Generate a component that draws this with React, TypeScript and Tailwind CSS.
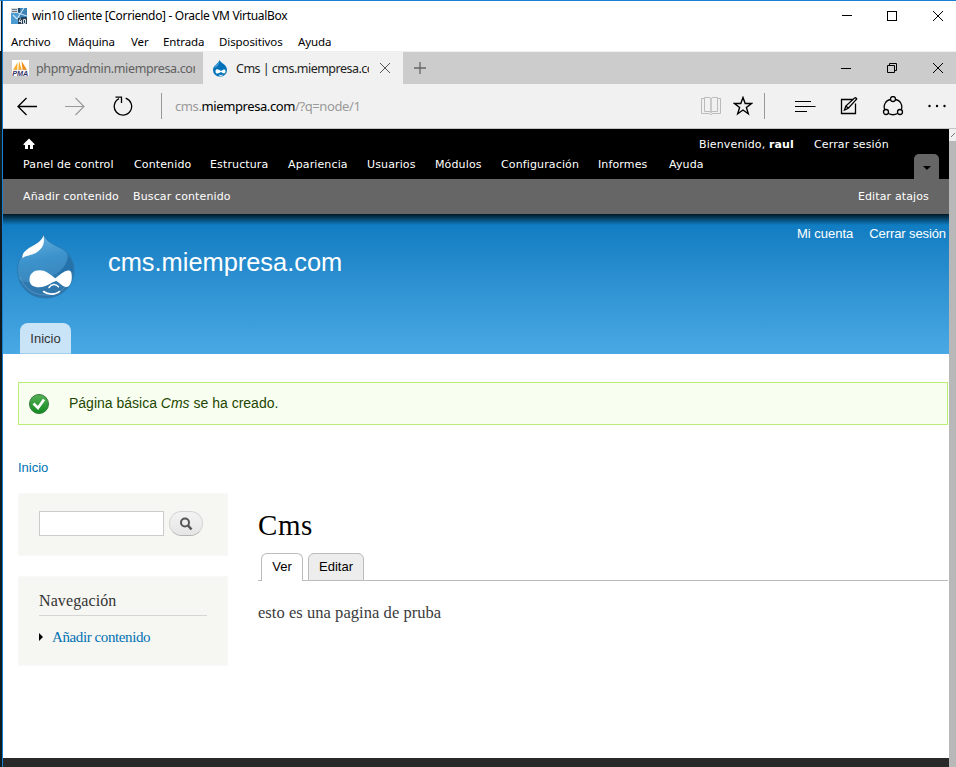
import type { ReactNode } from "react";

const ADMIN_LINKS = [
  { label: "Panel de control", width: "w-[111px]" },
  { label: "Contenido", width: "w-[76px]" },
  { label: "Estructura", width: "w-[78px]" },
  { label: "Apariencia", width: "w-[79px]" },
  { label: "Usuarios", width: "w-[68px]" },
  { label: "Módulos", width: "w-[66px]" },
  { label: "Configuración", width: "w-[97px]" },
  { label: "Informes", width: "w-[71px]" },
  { label: "Ayuda", width: "w-[40px]" },
];

const MENUS = [
  { label: "Archivo", width: "w-[57px]" },
  { label: "Máquina", width: "w-[63px]" },
  { label: "Ver", width: "w-[32px]" },
  { label: "Entrada", width: "w-[56px]" },
  { label: "Dispositivos", width: "w-[79px]" },
  { label: "Ayuda", width: "w-[40px]" },
];

function CloseIcon() {
  return (
    <svg width="10" height="10" viewBox="0 0 10 10" stroke="currentColor" fill="none">
      <path d="M0 0L10 10M10 0L0 10" />
    </svg>
  );
}

function VirtualBoxIcon() {
  return (
    <svg width="16" height="16" viewBox="0 0 16 16">
      <rect width="16" height="16" fill="#244a68" />
      <path d="M0 5h8l4 11H0z" fill="#4c9bd3" />
      <path d="M9 0h7v9H9z" fill="#3c83b8" />
      <path d="M0 0h7v5H0z" fill="#d6dde2" />
      <path d="M1 1.500h5M1 3.500h5" stroke="#6b7680" />
      <path d="M13 0L6 11M7 5l9 3M2 7l4 4" stroke="#cfe6f5" strokeWidth="1.100" />
      <path d="M7 10h9v6H7z" fill="#2a3f52" />
      <path d="M9.500 10.500L8 13.500h3M10.500 12v3.500M12.500 11.500h2v4h-2z" stroke="#d7dfe5" fill="none" />
    </svg>
  );
}

function PmaIcon() {
  return (
    <svg width="17" height="16" viewBox="0 0 17 16">
      <rect width="17" height="16" fill="#fff" />
      <path d="M1 10L5.500 2.500 5.200 10zM6.300 10L7 1l2.800 9z" fill="#f9ac28" />
      <path d="M10.600 10L9.500 1l5.500 9z" fill="#f18b12" />
      <path d="M1 10h14" stroke="#c9c9d6" strokeWidth="0.600" />
      <text x="0.300" y="15.700" textLength="16" lengthAdjust="spacingAndGlyphs" fill="#333366" className="font-['Liberation_Sans'] text-[7px] font-bold italic">PMA</text>
    </svg>
  );
}

function SmallDrop() {
  return (
    <svg width="16" height="17" viewBox="0 0 16 17">
      <path d="M7.500 0C8.300 3 15 4.300 15 10a7 6.600 0 0 1-14 0C1 5 6.500 4 7.500 0z" fill="#0072b9" />
      <path d="M7.300 1C6 4 3 4.500 2 7.500c3 0 5-2.500 5.300-6.500z" fill="#4ba0d6" />
      <path d="M3.500 11.500c0-3.300 3.200-2.300 5.500-.5 2-1.500 4.500-2.500 4.500.3 0 3.200-2.500 2.200-4.500.8-2.200 1.500-5.500 2.600-5.500-.6z" fill="#fff" />
      <path d="M7.200 15c1 .6 2.400.6 3.400 0" stroke="#fff" fill="none" />
    </svg>
  );
}

function DrupalLogo() {
  return (
    <svg width="58" height="66" viewBox="0 0 58 66">
      <defs>
        <linearGradient id="drop" x1="0" y1="0" x2="0.200" y2="1">
          <stop offset="0" stopColor="#6ab6e4" />
          <stop offset="0.450" stopColor="#3c92cb" />
          <stop offset="1" stopColor="#3a80b4" />
        </linearGradient>
        <clipPath id="body">
          <path d="M26.700 0.500C29 8 38 11 44.500 14.500 53 19.500 57 28 57 36c0 16-12.500 28-28.500 28S0.500 52 0.500 36C0.500 28 4 22 9 17 14.500 12 24 8 26.700 0.500z" />
        </clipPath>
      </defs>
      <g clipPath="url(#body)">
        <rect width="58" height="66" fill="url(#drop)" />
        <path d="M52 16c1 12-6 20-15 25C26 48 12 52 0 44v22h58V16z" fill="#246a9f" opacity="0.500" />
        <path d="M50 18c2 8-2 16-10 22l16-2 2-12z" fill="#1f6ca6" opacity="0.600" />
      </g>
      <path d="M26.700 0.500C29 8 38 11 44.500 14.500 53 19.500 57 28 57 36c0 16-12.500 28-28.500 28S0.500 52 0.500 36C0.500 28 4 22 9 17 14.500 12 24 8 26.700 0.500z" fill="none" stroke="#2878b0" strokeWidth="0.800" />
      <path d="M3 43c4 11 13 18 25.500 18S50 54 54 44" stroke="#6fb0de" fill="none" opacity="0.500" />
      <path d="M26.500 1.500c1 6 0.500 11-5 15.500C15.500 22 10 20.500 5.500 24 4.500 19 10 15 15.500 12S25 6.500 26.500 1.500z" fill="#fff" />
      <path d="M12.500 45.500c0-6 4.500-9.300 10-9.300 7 0 11.500 5.300 16 8 4-2.700 8.500-7.700 13-7.700 2.700 0 3.300 2.500 3.300 6.500 0 5.500-2.300 10-5.300 10-4 0-7-4.800-10.500-6C34 48.500 29 53.300 22 53.300c-5.500 0-9.500-2.300-9.500-7.800z" fill="#fff" />
      <path d="M32 53.500c2.500-4 7-4 9.500-.7" stroke="#fff" strokeWidth="1.500" fill="none" strokeLinecap="round" />
      <path d="M26.500 57.500c4.500 3.500 12 3.500 16 0" stroke="#fff" strokeWidth="1.600" fill="none" strokeLinecap="round" />
    </svg>
  );
}

function TitleBar() {
  return (
    <header className="h-[50px] shrink-0 bg-white font-['Noto_Sans',sans-serif] text-[12px] text-black">
      <div className="flex h-[29px] items-center pl-2">
        <VirtualBoxIcon />
        <span className="ml-[5px] grow whitespace-nowrap tracking-[-0.32px]">win10 cliente [Corriendo] - Oracle VM VirtualBox</span>
        <span className="mr-[35px] h-px w-[10px] bg-black" />
        <span className="mr-9 size-[10px] border border-black" />
        <span className="mr-[13px]"><CloseIcon /></span>
      </div>
      <nav className="flex h-[21px] items-center pl-2 pt-0.5 text-[11.500px] tracking-[-0.1px]">
        {MENUS.map((m) => (
          <span key={m.label} className={`${m.width} shrink-0 whitespace-nowrap`}>{m.label}</span>
        ))}
      </nav>
    </header>
  );
}

function TabStrip() {
  return (
    <div className="flex h-[33px] shrink-0 border-t border-[#eeeeee] bg-[#cccccc] font-['Noto_Sans',sans-serif] text-[12.500px]">
      <div className="flex w-[200px] items-center pl-[9px] text-[#606060]">
        <PmaIcon />
        <span className="ml-[7px] w-[159px] overflow-hidden whitespace-nowrap pt-0.5 tracking-[-0.37px]">phpmyadmin.miempresa.com</span>
      </div>
      <div className="flex w-[200px] items-center bg-[#f1f1f1] pl-[9px] text-[#222222]">
        <SmallDrop />
        <span className="ml-2 w-[133px] overflow-hidden whitespace-nowrap pt-0.5 tracking-[-0.52px]">Cms | cms.miempresa.com</span>
        <span className="ml-[11px] text-[#555]"><CloseIcon /></span>
      </div>
      <div className="flex grow items-center">
        <svg className="ml-[11px] text-[#666]" width="12" height="12" viewBox="0 0 12 12" stroke="currentColor"><path d="M6 0v12M0 6h12" strokeWidth="1.300" /></svg>
      </div>
      <div className="flex items-center text-black">
        <span className="mr-[36px] h-px w-[10px] bg-black" />
        <svg className="mr-9" width="10" height="10" viewBox="0 0 10 10" fill="none" stroke="currentColor"><path d="M0.500 2.500h7v7h-7zM2.500 2V0.500h7v7H8" /></svg>
        <span className="mr-[13px]"><CloseIcon /></span>
      </div>
    </div>
  );
}

function AddressBar() {
  return (
    <div className="flex h-[45px] shrink-0 items-center border-b border-[#c4c4c4] bg-[#f1f1f1] pl-[14px] text-black">
      <svg width="20" height="19" viewBox="0 0 20 19" fill="none" stroke="currentColor" strokeWidth="1.300"><path d="M20 9.500H1M9.500 1L1 9.500 9.500 18" /></svg>
      <svg className="ml-7 text-[#999]" width="20" height="19" viewBox="0 0 20 19" fill="none" stroke="currentColor" strokeWidth="1.100"><path d="M0 9.500h19M10.500 1L19 9.500 10.500 18" /></svg>
      <svg className="ml-[28px]" width="20" height="20" viewBox="0 0 20 20" fill="none" stroke="currentColor" strokeWidth="1.300"><path d="M12.700 2.200A8.700 8.700 0 1 1 6 2.700M2.500 1.200H8.500V7" /></svg>
      <span className="ml-[28px] h-[26px] w-px bg-[#999]" />
      <span className="ml-[13px] grow whitespace-nowrap pt-px font-['Noto_Sans',sans-serif] text-[13px] tracking-[-0.4px] text-[#999]">cms.<span className="text-black">miempresa.com</span>/?q=node/1</span>
      <svg className="text-[#bbb]" width="20" height="19" viewBox="0 0 20 19" fill="none" stroke="currentColor"><path d="M3.500 1.500H0.500v15h8l1.500 1.500 1.500-1.500h8v-15h-3M3.500 .5H8q2 0 2 2v13q0-1-2-1H3.500zM16.500 .5H12q-2 0-2 2v13q0-1 2-1h4.500z" /></svg>
      <svg className="ml-3" width="20" height="20" viewBox="0 0 20 20" fill="none" stroke="currentColor" strokeWidth="1.400"><path d="M10 1.500l2.200 6h6.300l-5.100 3.900 1.900 6.300L10 14l-5.300 3.700 1.900-6.300-5.100-3.900h6.300z" /></svg>
      <span className="ml-[11px] h-[26px] w-px bg-[#999]" />
      <svg className="ml-[30px]" width="21" height="12" viewBox="0 0 21 12" stroke="currentColor"><path d="M0 1.500h16M0 6.500h20.500M0 11.500h12" strokeWidth="1.200" /></svg>
      <svg className="ml-[24px]" width="19" height="18" viewBox="0 0 19 18" fill="none" stroke="currentColor" strokeWidth="1.300"><path d="M12.500 2.500h-11v14h14V6.500M4.500 13l1.300-4L14.500 1q1.500-.7 2.300 1L8.300 11.300zM5.800 9l2.500 2.300" /></svg>
      <svg className="ml-[23px]" width="22" height="20" viewBox="0 0 22 20" fill="none" stroke="currentColor" strokeWidth="1.300"><circle cx="11" cy="3" r="2.500" /><circle cx="4" cy="16" r="2.500" /><circle cx="18" cy="16" r="2.500" /><path d="M8.500 3.500C4 4 1 9 2.700 13.500M13.500 3.500C18 4 21 9 19.300 13.500M6.500 17.500q4.500 2.500 9 0" /></svg>
      <svg className="ml-[24px] mr-[10px]" width="18" height="4" viewBox="0 0 18 4"><circle cx="1.500" cy="2" r="1.200" /><circle cx="9" cy="2" r="1.200" /><circle cx="16.500" cy="2" r="1.200" /></svg>
    </div>
  );
}

function AdminToolbar() {
  return (
    <div className="font-['DejaVu_Sans',sans-serif] text-[11px] leading-[14px] tracking-[0.13px] text-white">
      <div className="relative h-[50px] bg-black pl-5 pt-[9px]">
        <div className="flex h-[20px]">
          <svg width="12" height="12" viewBox="0 0 12 12" fill="white"><path d="M6 0.500L11.500 6v1H10v4H7V7H5v4H2V7H0.500V6z" /></svg>
          <span className="ml-[664px] w-[115px] whitespace-nowrap">Bienvenido, <b>raul</b></span>
          <span className="whitespace-nowrap">Cerrar sesión</span>
        </div>
        <nav className="flex">
          {ADMIN_LINKS.map((l) => (
            <span key={l.label} className={`${l.width} shrink-0 whitespace-nowrap`}>{l.label}</span>
          ))}
        </nav>
        <button className="absolute bottom-0 right-[10px] flex h-[25px] w-[25px] items-center justify-center rounded-t-[5px] bg-[#666]">
          <svg className="mt-0.5" width="8" height="4" viewBox="0 0 8 4"><path d="M0 0h8L4 4z" /></svg>
        </button>
      </div>
      <div className="flex h-[35px] items-center bg-[#666] pl-5 pr-[20px]">
        <span className="w-[110px]">Añadir contenido</span>
        <span className="grow">Buscar contenido</span>
        <span>Editar atajos</span>
      </div>
    </div>
  );
}

function SiteHeader() {
  return (
    <header className="flex h-[140px] flex-col bg-linear-to-b from-[#0779bf] to-[#48a9e4] text-white">
      <div className="h-[11px] bg-linear-to-b from-black/80 to-transparent" />
      <div className="flex h-[98px] pl-[14px]">
        <div className="pt-[9px]"><DrupalLogo /></div>
        <h1 className="ml-[33px] mt-[22px] grow font-['Liberation_Sans',sans-serif] text-[25.400px] leading-[30px]">cms.miempresa.com</h1>
        <nav className="flex gap-4 whitespace-nowrap pr-[3px] font-['Liberation_Sans',sans-serif] text-[13px] leading-[18px]">
          <span>Mi cuenta</span>
          <span className="tracking-[-0.1px]">Cerrar sesión</span>
        </nav>
      </div>
      <div className="ml-[17px] flex h-[31px] w-[51px] items-center justify-center rounded-t-[8px] border-b border-[#a3cfec] bg-[#c8e4f6] pt-px font-['Liberation_Sans',sans-serif] text-[13px] text-[#333]">Inicio</div>
    </header>
  );
}

function Block({ children, className }: { children: ReactNode; className: string }) {
  return <section className={`w-[210px] border border-[#f9f9f9] bg-[#f6f6f2] px-5 ${className}`}>{children}</section>;
}

function Content() {
  return (
    <main className="h-[404px] bg-white pl-[15px] font-['Liberation_Sans',sans-serif]">
      <div className="pt-7">
        <div className="mr-px flex h-[43px] items-center border border-[#bbee77] bg-[#f8fff0] pl-[10px] text-[14px] text-[#234600]">
          <svg width="20" height="20" viewBox="0 0 20 20"><defs><linearGradient id="ok" x2="0" y2="1"><stop stopColor="#56b156" /><stop offset="1" stopColor="#118a20" /></linearGradient></defs><circle cx="10" cy="10" r="9.500" fill="url(#ok)" stroke="#35763b" /><path d="M4.500 9.500L9 14l6-8.500" stroke="white" strokeWidth="2.700" fill="none" /></svg>
          <span className="ml-5">Página básica <i>Cms</i> se ha creado.</span>
        </div>
      </div>
      <div className="mt-[33px] h-[20px] text-[13px] leading-[20px] text-[#0071b3]">Inicio</div>
      <div className="mt-[15px] flex">
        <aside className="w-[240px] shrink-0">
          <Block className="flex h-[63px] pt-[17px]">
            <span className="h-[25px] w-[125px] border border-[#ccc] bg-white" />
            <span className="ml-[5px] flex h-[25px] w-[34px] items-center justify-center rounded-full border border-[#d4d4d4] border-b-[#b4b4b4] bg-linear-to-b from-[#f3f3f3] to-[#e5e5e5]">
              <svg width="14" height="14" viewBox="0 0 14 14" fill="none" stroke="#555" strokeWidth="2"><circle cx="6" cy="5.500" r="4" /><path d="M9 8.500L12.500 12.500" strokeWidth="2.500" /></svg>
            </span>
          </Block>
          <Block className="mt-5 h-[90px] font-['Liberation_Serif',serif]">
            <h2 className="h-[39px] border-b border-[#d6d6d6] pt-[14px] text-[16px] leading-[20px] tracking-[0.1px] text-[#333]">Navegación</h2>
            <div className="flex items-center pt-[11px] text-[15px] leading-[20px] tracking-[-0.4px] text-[#0071b3]">
              <svg width="4" height="8" viewBox="0 0 4 8" fill="black"><path d="M0 0l4 4-4 4z" /></svg>
              <span className="ml-[9px]">Añadir contenido</span>
            </div>
          </Block>
        </aside>
        <article className="grow font-['Liberation_Serif',serif]">
          <h1 className="h-[60px] pt-[14px] text-[29px] leading-[36px] tracking-[0.6px] text-black">Cms</h1>
          <div className="flex h-[28px] items-end font-['Liberation_Sans',sans-serif] text-[13px] text-black">
            <span className="h-px w-[3px] bg-[#bbb]" />
            <span className="flex h-[28px] w-[42px] items-center justify-center rounded-t-[6px] border border-b-0 border-[#bbb] bg-white pb-px">Ver</span>
            <span className="h-px w-[5px] bg-[#bbb]" />
            <span className="flex h-[28px] w-[56px] items-center justify-center rounded-t-[6px] border border-[#bbb] bg-[#ededed]">Editar</span>
            <span className="mr-px h-px grow bg-[#bbb]" />
          </div>
          <p className="pt-[22px] text-[16.500px] leading-[20px] tracking-[0.05px] text-[#3b3b3b]">esto es una pagina de pruba</p>
        </article>
      </div>
    </main>
  );
}

export default function App() {
  return (
    <div className="flex h-[767px] w-[956px] overflow-hidden border-t border-[#1a7fd0] bg-[#071218]">
      <div className="w-[3px] shrink-0 border-r border-[#1a7fd0] bg-[#101b20]">
        <div className="h-[50px] w-px bg-[#e4e8ea]" />
      </div>
      <div className="flex min-w-0 grow flex-col">
        <TitleBar />
        <TabStrip />
        <AddressBar />
        <div className="flex">
          <div className="w-[946px] shrink-0">
            <AdminToolbar />
            <SiteHeader />
            <Content />
            <footer className="h-[9px] bg-[#292929]" />
          </div>
          <div className="flex w-[7px] flex-col bg-[#b8b8b8]">
            <div className="flex h-[12px] items-center justify-end bg-[#f0f0f0]"><svg width="5" height="5" viewBox="0 0 5 5" fill="none" stroke="#777"><path d="M0 4l4-4" /></svg></div>
          </div>
        </div>
      </div>
    </div>
  );
}
